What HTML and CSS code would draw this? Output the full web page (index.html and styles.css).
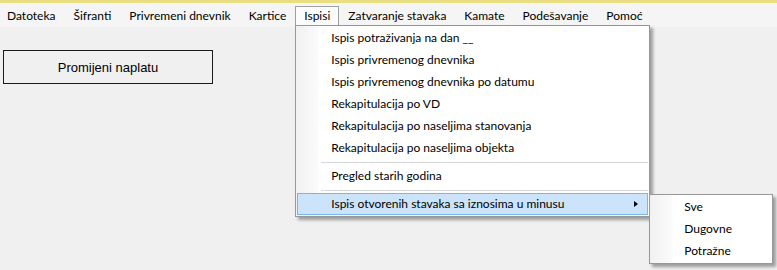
FILE: index.html
```html
<!DOCTYPE html>
<html lang="hr">
<head>
<meta charset="UTF-8">
<meta name="viewport" content="width=device-width, initial-scale=1.0">
<title>Naplata</title>
<link rel="stylesheet" href="styles.css">
</head>
<body>
    <div class="top-strip"></div>

    <ul class="menubar">
        <li class="menu-item">Datoteka</li>
        <li class="menu-item">Šifranti</li>
        <li class="menu-item">Privremeni dnevnik</li>
        <li class="menu-item">Kartice</li>
        <li class="menu-item open">Ispisi
            <ul class="dropdown">
                <li>Ispis potraživanja na dan __</li>
                <li>Ispis privremenog dnevnika</li>
                <li>Ispis privremenog dnevnika po datumu</li>
                <li>Rekapitulacija po VD</li>
                <li>Rekapitulacija po naseljima stanovanja</li>
                <li>Rekapitulacija po naseljima objekta</li>
                <li class="separator"></li>
                <li>Pregled starih godina</li>
                <li class="separator"></li>
                <li class="active has-sub">Ispis otvorenih stavaka sa iznosima u minusu
                    <span class="arrow"></span>
                    <ul class="dropdown submenu">
                        <li>Sve</li>
                        <li>Dugovne</li>
                        <li>Potražne</li>
                    </ul>
                </li>
            </ul>
        </li>
        <li class="menu-item">Zatvaranje stavaka</li>
        <li class="menu-item">Kamate</li>
        <li class="menu-item">Podešavanje</li>
        <li class="menu-item">Pomoć</li>
    </ul>

    <div class="content">
        <button class="btn">Promijeni naplatu</button>
    </div>
</body>
</html>
```

FILE: styles.css
```css
html, body {
    height: 100%;
}
body {
    margin: 0;
    background-color: #f0f0f0;
    font-family: Lato, "Noto Sans", sans-serif;
    font-size: 12px;
    color: #000;
}
ul {
    list-style: none;
    margin: 0;
    padding: 0;
}
.top-strip {
    height: 3px;
    background-color: #e9df82;
}

/* menu strip */
.menubar {
    display: flex;
    height: 24px;
    padding: 3px 0 0 0;
    box-sizing: border-box;
    background-color: #f5f5f5;
}
.menu-item {
    position: relative;
    height: 19px;
    line-height: 17px;
    padding: 0 8px;
    border: 1px solid transparent;
    border-bottom: none;
    white-space: nowrap;
}
.menu-item:first-child {
    padding-left: 6px;
}
.menu-item.open {
    background-color: #fcfcfc;
    border-color: #a0a0a0;
}

/* dropdown */
.dropdown {
    position: absolute;
    left: -1px;
    top: 18px;
    z-index: 10;
    width: 351px;
    padding: 1px;
    border: 1px solid #979797;
    background: linear-gradient(to right, #f1f1f1, #fbfbfb 22px, #fff 23px);
    box-shadow: 3px 3px 3px rgba(0, 0, 0, 0.35);
}
.dropdown li {
    position: relative;
    height: 20px;
    line-height: 20px;
    padding-left: 33px;
    border: 1px solid transparent;
}
.dropdown li.separator {
    height: 6px;
    padding: 0;
    border: none;
}
.dropdown li.separator::after {
    content: "";
    position: absolute;
    left: 24px;
    right: 0;
    top: 3px;
    border-top: 1px solid #d7d7d7;
}
.dropdown li.active {
    background-color: #cce4fb;
    border-color: #7ab6ee;
}
.arrow {
    position: absolute;
    right: 9px;
    top: 7px;
    width: 0;
    height: 0;
    border-top: 3.5px solid transparent;
    border-bottom: 3.5px solid transparent;
    border-left: 4px solid #000;
}
.submenu {
    left: 351px;
    top: 0;
    width: 120px;
}
.submenu li {
    padding-left: 32px;
}

/* content */
.content {
    padding: 23px 3px;
}
.btn {
    width: 210px;
    height: 34px;
    background-color: #f0f0f0;
    border: 1px solid #1a1a1a;
    font-family: "Liberation Sans", Arial, sans-serif;
    font-size: 13px;
    color: #000;
}
```
